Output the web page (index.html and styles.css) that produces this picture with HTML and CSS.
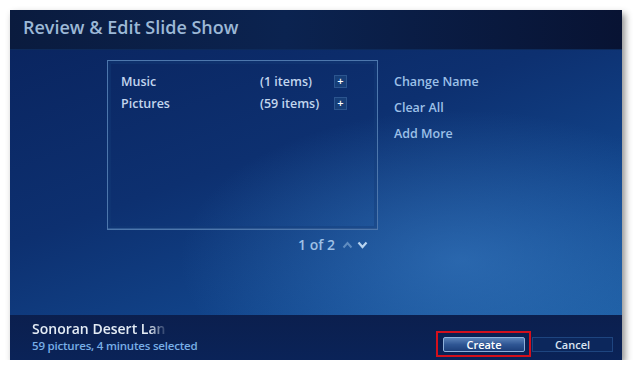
FILE: index.html
```html
<!doctype html>
<html lang="en">
  <head>
    <meta charset="utf-8">
    <title>Review &amp; Edit Slide Show</title>
    <link rel="stylesheet" href="styles.css">
  </head>
  <body>
    <div class="window">
      <div class="title_bar">
        <h1>Review &amp; Edit Slide Show</h1>
      </div>

      <div class="main">
        <div class="list_column">
          <div class="list_box">
            <div class="list_row">
              <span class="list_row__name">Music</span>
              <span class="list_row__count">(1 items)</span>
              <span class="plus">+</span>
            </div>
            <div class="list_row">
              <span class="list_row__name">Pictures</span>
              <span class="list_row__count">(59 items)</span>
              <span class="plus">+</span>
            </div>
          </div>
          <div class="pager">
            <span class="pager__text">1 of 2</span>
            <svg class="arrow arrow_up" width="11" height="8" viewBox="0 0 11 8">
              <path d="M1.5 6.5 L5.5 2 L9.5 6.5" fill="none" stroke="currentColor" stroke-width="2"/>
            </svg>
            <svg class="arrow arrow_down" width="11" height="8" viewBox="0 0 11 8">
              <path d="M1.5 1.5 L5.5 6 L9.5 1.5" fill="none" stroke="currentColor" stroke-width="2.2"/>
            </svg>
          </div>
        </div>
        <div class="actions">
          <div class="action">Change Name</div>
          <div class="action">Clear All</div>
          <div class="action">Add More</div>
        </div>
      </div>

      <div class="bottom_bar">
        <div class="info">
          <div class="info__title">Sonoran Desert Lan</div>
          <div class="info__sub">59 pictures, 4 minutes selected</div>
        </div>
        <div class="buttons">
          <div class="highlight">
            <div class="btn btn_create">Create</div>
          </div>
          <div class="btn btn_cancel">Cancel</div>
        </div>
      </div>
    </div>
  </body>
</html>
```

FILE: styles.css
```css
body{
  margin: 0;
  background: #ffffff;
  font-family: "Open Sans", "Noto Sans", Arial, sans-serif;
}
.window{
  margin: 10px 0 0 10px;
  width: 612px;
  height: 350px;
  display: flex;
  flex-direction: column;
  box-shadow: 3px 4px 7px rgba(0, 0, 0, 0.45);
}
/*--------------------------*/
.title_bar{
  height: 40px;
  background: linear-gradient(90deg, #0a1b3e 0%, #0b2350 45%, #081333 100%);
  border-bottom: 1px solid #0d2a5a;
  box-sizing: border-box;
}
.title_bar h1{
  margin: 0;
  padding: 5px 0 0 13px;
  font-size: 18px;
  font-weight: 600;
  color: #9cb8d6;
}
/*--------------------------*/
.main{
  height: 265px;
  display: flex;
  padding: 10px 0 0 97px;
  box-sizing: border-box;
  background:
    radial-gradient(ellipse 280px 150px at 450px 210px, rgba(70, 140, 210, 0.45), rgba(70, 140, 210, 0) 100%),
    linear-gradient(160deg, #0a2560 0%, #0d3070 40%, #12478e 75%, #1a5aa0 100%);
}
.list_column{
  width: 271px;
  display: flex;
  flex-direction: column;
}
.list_box{
  height: 170px;
  box-sizing: border-box;
  border: 1px solid #4d77ad;
  box-shadow: inset 0 0 0 3px rgba(20, 60, 120, 0.4), inset 0 -5px 0 -4px #3b66a0;
  padding: 9px 0 0 13px;
}
.list_row{
  display: flex;
  align-items: center;
  height: 22px;
  font-size: 12.5px;
  font-weight: 600;
  color: #c2d6ee;
}
.list_row__name{
  width: 139px;
}
.list_row__count{
  width: 74px;
}
.plus{
  width: 13px;
  height: 13px;
  box-sizing: border-box;
  border: 1px solid #2c558f;
  background: #163e78;
  color: #ffffff;
  font-size: 11px;
  line-height: 10px;
  text-align: center;
}
.pager{
  display: flex;
  align-items: center;
  justify-content: flex-end;
  gap: 4px;
  padding: 5px 10px 0 0;
  color: #9ec0e6;
}
.pager__text{
  font-size: 14px;
  font-weight: 600;
  margin-right: 3px;
}
.arrow_up{
  color: #5f8cc0;
}
.arrow_down{
  color: #b9d4f0;
}
/*--------------------------*/
.actions{
  padding: 13px 0 0 16px;
}
.action{
  height: 26px;
  font-size: 12.5px;
  font-weight: 600;
  color: #9cc0e8;
}
/*--------------------------*/
.bottom_bar{
  height: 45px;
  display: flex;
  justify-content: space-between;
  background: linear-gradient(180deg, #0b1f4e 0%, #0a2358 100%);
}
.info{
  padding: 5px 0 0 22px;
}
.info__title{
  width: fit-content;
  height: 18px;
  line-height: 18px;
  white-space: nowrap;
  font-size: 14px;
  font-weight: 600;
  color: #e4ecf5;
  -webkit-mask-image: linear-gradient(90deg, #000 88%, rgba(0, 0, 0, 0.15) 100%);
}
.info__sub{
  font-size: 11.5px;
  line-height: 16px;
  letter-spacing: -0.2px;
  font-weight: 600;
  color: #78aee6;
}
.buttons{
  display: flex;
  align-items: flex-start;
  padding: 16px 9px 0 0;
}
.highlight{
  border: 2px solid #d4101c;
  padding: 4px 4px 3px 5px;
  margin-right: 1px;
}
.btn{
  width: 82px;
  height: 15px;
  box-sizing: border-box;
  font-size: 11px;
  font-weight: 600;
  line-height: 13px;
  text-align: center;
  color: #ffffff;
}
.btn_create{
  border: 1px solid #8fb0da;
  border-radius: 2px;
  background: linear-gradient(180deg, #5a82b8 0%, #2f5694 50%, #1c3f7a 100%);
}
.btn_cancel{
  margin-top: 6px;
  width: 81px;
  border: 1px solid #1e4580;
  color: #d8e4f2;
  background: #0c275c;
}
```
